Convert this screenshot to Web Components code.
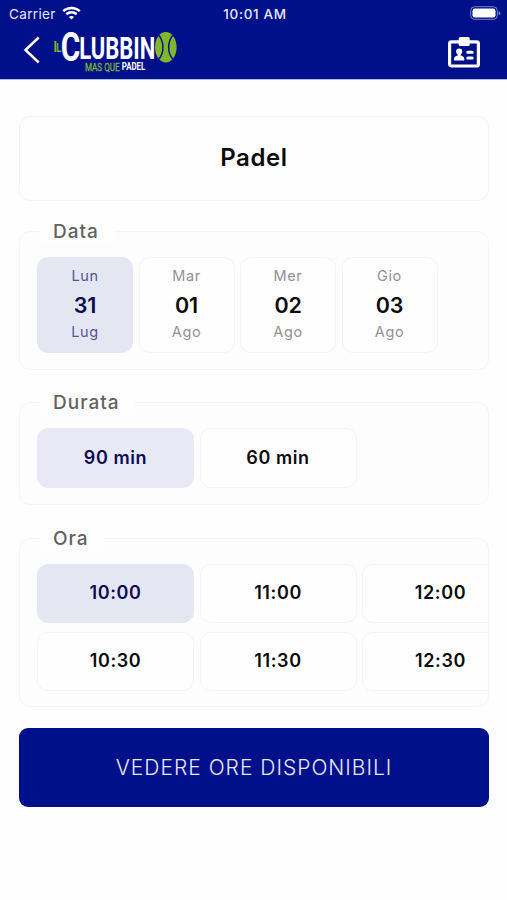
<!DOCTYPE html>
<html lang="it">
<head>
<meta charset="utf-8">
<meta name="viewport" content="width=device-width, initial-scale=1">
<title>Il Clubbino</title>
<style>
  body {
    margin: 0;
    background: #fefefe;
    font-family: Inter, "Noto Sans", sans-serif;
    color: #0b0b0b;
  }
</style>
</head>
<body>
<club-app></club-app>

<script>
function define(name, html) {
  const tmpl = document.createElement("template");
  tmpl.innerHTML = html;
  customElements.define(
    name,
    class extends HTMLElement {
      constructor() {
        super();
        this.attachShadow({ mode: "open" });
        this.shadowRoot.appendChild(tmpl.content.cloneNode(true));
      }
    }
  );
}

define("status-bar", `
  <style>
    :host {
      display: grid;
      grid-template-columns: 1fr auto 1fr;
      align-items: center;
      height: 28px;
      padding: 0 6px 0 9px;
      color: #e4e8fb;
      font-size: 13.5px;
    }
    .left { display: flex; align-items: center; gap: 6px; }
    .left span { letter-spacing: 0.35px; }
    .left svg { margin-top: -2px; }
    .time { font-weight: 500; font-size: 13.5px; letter-spacing: 0.65px; }
    .battery { justify-self: end; margin-top: -2px; }
    svg { display: block; }
  </style>
  <div class="left">
    <span>Carrier</span>
    <svg width="19" height="14" viewBox="0 0 19 14" fill="none" stroke="#fff" stroke-width="2.5">
      <path d="M1.2 5.2C5.8 .9 13.2 .9 17.8 5.2"/>
      <path d="M4.3 8.3C7.2 5.7 11.8 5.7 14.7 8.3"/>
      <path d="M9.5 13.5L6.9 10.9C8.3 9.6 10.7 9.6 12.1 10.9Z" fill="#fff" stroke="none"/>
    </svg>
  </div>
  <div class="time">10:01 AM</div>
  <svg class="battery" width="31" height="14" viewBox="0 0 31 14">
    <rect x=".7" y=".7" width="26.6" height="12.6" rx="4" fill="none" stroke="#7b83cb" stroke-width="1"/>
    <rect x="2.5" y="2.5" width="23" height="9" rx="2.2" fill="#fff"/>
    <path d="M28.7 5V9.4Q30.3 8.8 30.3 7.2T28.7 5Z" fill="#7b83cb"/>
  </svg>
`);

define("club-logo", `
  <style>
    :host { display: block; }
    svg { display: block; overflow: visible; }
    text { font-family: Roboto, sans-serif; font-weight: 700; }
    .tag { font-weight: 400; }
  </style>
  <svg width="126" height="46" viewBox="0 0 126 46">
    <g fill="#80b62c">
      <text x=".5" y="22.7" font-size="15" textLength="3.5" lengthAdjust="spacingAndGlyphs">I</text>
      <text x="3.3" y="22.7" font-size="12" textLength="5" lengthAdjust="spacingAndGlyphs">L</text>
      <text class="tag" x="32" y="41.5" font-size="11" textLength="34.5" lengthAdjust="spacingAndGlyphs" stroke="#80b62c" stroke-width=".3">MAS QUE</text>
    </g>
    <g fill="#fff">
      <text x="7.8" y="31.8" font-size="40" textLength="19.5" lengthAdjust="spacingAndGlyphs">C</text>
      <text x="26.3" y="29.7" font-size="31.5" textLength="76" lengthAdjust="spacingAndGlyphs">LUBBIN</text>
      <text x="68.8" y="41.2" font-size="10" textLength="23.5" lengthAdjust="spacingAndGlyphs">PADEL</text>
    </g>
    <ellipse cx="112.8" cy="18.2" rx="10.8" ry="15.2" fill="#80b62c"/>
    <g fill="none" stroke="#07158d" stroke-width="1.5">
      <path d="M105.8 6.2C111.3 12.7 111.3 23.7 105.8 30.2"/>
      <path d="M119.8 6.2C114.3 12.7 114.3 23.7 119.8 30.2"/>
    </g>
  </svg>
`);

define("app-header", `
  <style>
    :host { display: block; height: 79px; background: #00108b; box-shadow: 0 1px 0 #b6badf; }
    nav { display: flex; align-items: flex-start; padding: 1px 26px 0 23px; }
    svg { display: block; }
    .back { margin: 7px 13px 0 0; }
    .card { margin: 8px 0 0 auto; }
  </style>
  <status-bar></status-bar>
  <nav>
    <svg class="back" width="17" height="28" viewBox="0 0 17 28" fill="none" stroke="#fff" stroke-width="2.5">
      <path d="M15.7 1.5L2.5 14L15.7 26.5"/>
    </svg>
    <club-logo></club-logo>
    <svg class="card" width="34" height="32" viewBox="0 0 34 32">
      <rect x="2.6" y="4.8" width="28.8" height="24.2" rx="1.8" fill="none" stroke="#fff" stroke-width="3.2"/>
      <rect x="11.7" y="0" width="11" height="9" rx="1.6" fill="#fff"/>
      <circle cx="12.2" cy="14.6" r="3.1" fill="#fff"/>
      <path d="M10.7 16h3v2.4c2.3.4 3.6 1.6 3.6 3.7v1.4H7v-1.4c0-2.1 1.4-3.3 3.7-3.7Z" fill="#fff"/>
      <path d="M20.8 15.2h4.4M20.8 20.9h4.4" stroke="#fff" stroke-width="3" stroke-linecap="round"/>
    </svg>
  </nav>
`);

define("field-group", `
  <style>
    :host {
      display: block;
      box-sizing: border-box;
      border: 1.5px solid #f5f5f6;
      border-radius: 11px;
      background: #fdfdfd;
      padding: 0 0 0 17px;
    }
    .label {
      display: block;
      width: fit-content;
      margin: -14px 0 13px 3px;
      padding: 1px 15px 0 13px;
      height: 25px;
      line-height: 26px;
      background: #fefefe;
      font-size: 19px;
      font-weight: 500;
      letter-spacing: 1px;
      color: #626262;
    }
    .items { overflow: hidden; }
  </style>
  <span class="label"><slot name="label"></slot></span>
  <div class="items"><slot></slot></div>
`);

define("day-chip", `
  <style>
    :host {
      display: flex;
      flex-direction: column;
      align-items: center;
      box-sizing: border-box;
      width: 96px;
      height: 96px;
      padding-top: 7px;
      border: 1.5px solid #f4f4f5;
      border-radius: 11px;
      background: #fefefe;
      color: #929292;
      font-size: 14.5px;
      line-height: 22px;
      letter-spacing: 0.6px;
    }
    :host([selected]) {
      background: #e4e6f2;
      border-color: #e4e6f2;
      color: #555795;
    }
    .num {
      margin: 3px 0 0;
      line-height: 31px;
      font-size: 21.5px;
      font-weight: 600;
      letter-spacing: -0.2px;
      color: #0b0b0b;
    }
    :host([selected]) .num { color: #0b0b55; }
  </style>
  <slot name="weekday"></slot>
  <div class="num"><slot></slot></div>
  <slot name="month"></slot>
`);

define("option-chip", `
  <style>
    :host {
      display: flex;
      align-items: center;
      justify-content: center;
      box-sizing: border-box;
      height: 59px;
      padding-bottom: 2px;
      border: 1.5px solid #f4f4f5;
      border-radius: 11px;
      background: #fefefe;
      font-size: 18px;
      font-weight: 600;
      letter-spacing: 0.6px;
    }
    :host([selected]) {
      background: #e4e6f2;
      border-color: #e4e6f2;
      color: #0b0b55;
    }
  </style>
  <slot></slot>
`);

define("primary-button", `
  <style>
    :host {
      display: flex;
      align-items: center;
      justify-content: center;
      box-sizing: border-box;
      height: 79px;
      padding-bottom: 1px;
      border-radius: 9px;
      background: #00108b;
      color: #e6e9fb;
      font-size: 21px;
      font-weight: 300;
      letter-spacing: 1px;
    }
  </style>
  <slot></slot>
`);

define("club-app", `
  <style>
    :host { display: block; min-height: 900px; }
    main { padding: 37px 18px 0 19px; }
    .sport {
      box-sizing: border-box;
      height: 85px;
      margin-bottom: 30px;
      border: 1.5px solid #f4f4f5;
      border-radius: 11px;
      text-align: center;
      line-height: 82px;
      font-size: 24px;
      font-weight: 600;
      letter-spacing: 0.6px;
    }
    .date { height: 139px; margin-bottom: 32px; }
    .duration { height: 103px; margin-bottom: 33px; }
    .hour { height: 169px; margin-bottom: 21px; }
    .days { display: flex; gap: 5.5px; }
    .options { display: grid; grid-template-columns: repeat(3, 157px); gap: 9px 5.5px; }
    .duration option-chip[selected] { background: #e9e9f5; border-color: #e9e9f5; }
    .duration option-chip { height: 60px; }
  </style>
  <app-header></app-header>
  <main>
    <div class="sport">Padel</div>
    <field-group class="date">
      <span slot="label">Data</span>
      <div class="days">
        <day-chip selected><span slot="weekday">Lun</span>31<span slot="month">Lug</span></day-chip>
        <day-chip><span slot="weekday">Mar</span>01<span slot="month">Ago</span></day-chip>
        <day-chip><span slot="weekday">Mer</span>02<span slot="month">Ago</span></day-chip>
        <day-chip><span slot="weekday">Gio</span>03<span slot="month">Ago</span></day-chip>
      </div>
    </field-group>
    <field-group class="duration">
      <span slot="label">Durata</span>
      <div class="options">
        <option-chip selected>90 min</option-chip>
        <option-chip>60 min</option-chip>
      </div>
    </field-group>
    <field-group class="hour">
      <span slot="label">Ora</span>
      <div class="options">
        <option-chip selected>10:00</option-chip>
        <option-chip>11:00</option-chip>
        <option-chip>12:00</option-chip>
        <option-chip>10:30</option-chip>
        <option-chip>11:30</option-chip>
        <option-chip>12:30</option-chip>
      </div>
    </field-group>
    <primary-button>VEDERE ORE DISPONIBILI</primary-button>
  </main>
`);
</script>
</body>
</html>
